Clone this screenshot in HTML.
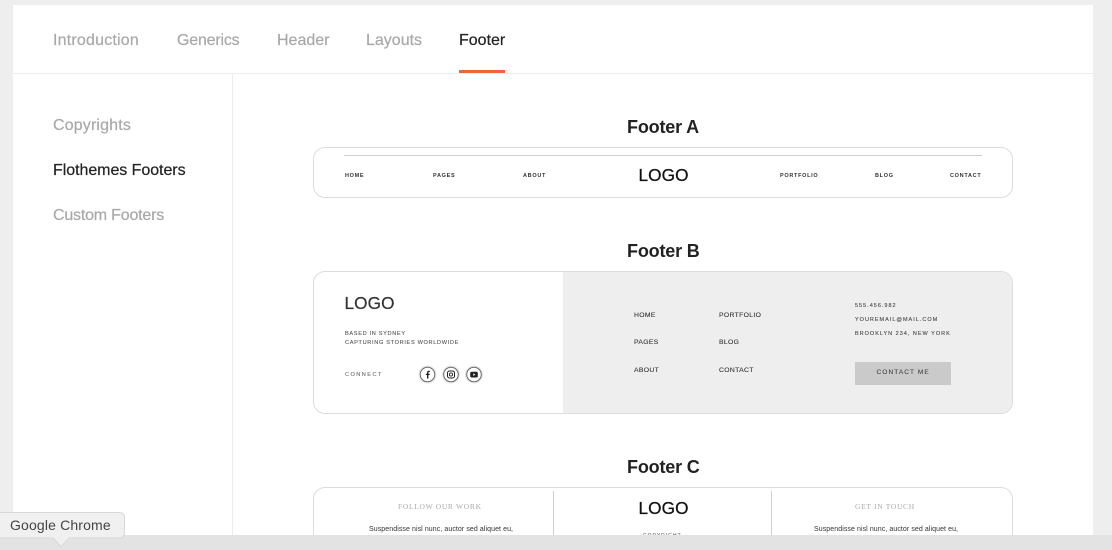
<!DOCTYPE html>
<html>
<head>
<meta charset="utf-8">
<style>
html,body{margin:0;padding:0;width:1112px;height:550px;overflow:hidden;background:#eeeeee;font-family:"Liberation Sans",sans-serif;}
.a{position:absolute;}
.t{position:absolute;white-space:nowrap;line-height:1;}
#wrap{position:absolute;left:0;top:0;width:1112px;height:550px;overflow:hidden;filter:blur(0.3px);}
.nav{font-size:16px;color:#a8a8a8;-webkit-text-stroke:.2px #a8a8a8;}
.side{font-size:16px;color:#a8a8a8;-webkit-text-stroke:.2px #a8a8a8;}
.h{font-size:18px;font-weight:bold;color:#222;letter-spacing:-.18px;}
.box{position:absolute;box-sizing:border-box;left:313px;width:700px;border:1px solid #dcdcdc;border-radius:12px;background:#fff;overflow:hidden;}
.s1{font-size:5.5px;font-weight:bold;color:#333;letter-spacing:.7px;top:174px;}
.logo{font-size:17.2px;color:#111;letter-spacing:.1px;-webkit-text-stroke:.25px #111;}
.s2{font-size:6.8px;color:#333;letter-spacing:.35px;-webkit-text-stroke:.1px #333;}
.s3{font-size:5.5px;color:#444;letter-spacing:1px;-webkit-text-stroke:.1px #444;}
.s4{font-size:5.6px;color:#555;letter-spacing:.67px;-webkit-text-stroke:.1px #555;}
.ser{font-family:"Liberation Serif",serif;font-size:7.5px;color:#aaa;letter-spacing:.68px;}
.p{font-size:7px;color:#333;letter-spacing:.08px;}
</style>
</head>
<body>
<div id="wrap">
<div class="a" style="left:13px;top:5px;width:1080px;height:530px;background:#fff;"></div>
<div class="a" style="left:13px;top:73px;width:1080px;height:1px;background:#ececec;"></div>
<div class="a" style="left:232px;top:74px;width:1px;height:461px;background:#ececec;"></div>

<div class="t nav" style="left:53px;top:32.500px;letter-spacing:.2px;">Introduction</div>
<div class="t nav" style="left:177px;top:32.500px;letter-spacing:-.2px;">Generics</div>
<div class="t nav" style="left:277px;top:32.500px;">Header</div>
<div class="t nav" style="left:366px;top:32.500px;">Layouts</div>
<div class="t nav" style="left:459px;top:32.500px;color:#222;-webkit-text-stroke:.2px #222;">Footer</div>
<div class="a" style="left:459px;top:70px;width:46px;height:3px;background:#f4623a;"></div>

<div class="t side" style="left:53px;top:117.500px;letter-spacing:.15px;">Copyrights</div>
<div class="t side" style="left:53px;top:162.500px;color:#222;-webkit-text-stroke:.2px #222;letter-spacing:-.05px;">Flothemes Footers</div>
<div class="t side" style="left:53px;top:207.500px;letter-spacing:-.2px;">Custom Footers</div>

<div class="t h" style="left:627px;top:118px;">Footer A</div>
<div class="box" style="top:147px;height:51px;"></div>
<div class="a" style="left:344px;top:154.500px;width:638px;height:1.500px;background:#cfcfcf;"></div>
<div class="t s1" style="left:345px;">HOME</div>
<div class="t s1" style="left:433px;">PAGES</div>
<div class="t s1" style="left:523px;">ABOUT</div>
<div class="t logo" style="left:638.500px;top:167px;">LOGO</div>
<div class="t s1" style="left:780px;">PORTFOLIO</div>
<div class="t s1" style="left:875px;">BLOG</div>
<div class="t s1" style="left:950px;">CONTACT</div>

<div class="t h" style="left:627px;top:242px;">Footer B</div>
<div class="box" style="top:271px;height:143px;">
  <div class="a" style="left:249px;top:0;width:451px;height:143px;background:#eeeeee;"></div>
</div>
<div class="t logo" style="left:344.500px;top:295px;color:#333;-webkit-text-stroke:.2px #333;">LOGO</div>
<div class="t s4" style="left:345px;top:332px;">BASED IN SYDNEY</div>
<div class="t s4" style="left:345px;top:341px;">CAPTURING STORIES WORLDWIDE</div>
<div class="t s4" style="left:345px;top:373px;letter-spacing:1.45px;color:#777;">CONNECT</div>

<svg class="a" style="left:418px;top:365px;" width="66" height="20" viewBox="0 0 66 20">
  <g fill="none" stroke="#e4e4e4" stroke-width="1">
    <circle cx="9.500" cy="9.500" r="8.500"/><circle cx="33" cy="9.500" r="8.500"/><circle cx="56" cy="9.500" r="8.500"/>
  </g>
  <g fill="#fff" stroke="#666" stroke-width="1">
    <circle cx="9.500" cy="9.500" r="7.300"/><circle cx="33" cy="9.500" r="7.300"/><circle cx="56" cy="9.500" r="7.300"/>
  </g>
  <path d="M10.400 13.500V10H11.600L11.800 8.700H10.400V7.800C10.400 7.300 10.600 7 11.200 7H11.900V5.800C11.600 5.700 11.200 5.700 10.800 5.700C9.700 5.700 9 6.400 9 7.600V8.700H7.800V10H9V13.500Z" fill="#222"/>
  <rect x="29.500" y="6" width="7" height="7" rx="2" fill="none" stroke="#222" stroke-width="1"/>
  <circle cx="33" cy="9.500" r="1.600" fill="none" stroke="#222" stroke-width=".9"/>
  <rect x="52.200" y="6.700" width="7.600" height="5.800" rx="1.500" fill="#222"/>
  <path d="M55.300 8.200V11L57.400 9.600Z" fill="#fff"/>
</svg>

<div class="t s2" style="left:634px;top:312.500px;">HOME</div>
<div class="t s2" style="left:634px;top:340px;">PAGES</div>
<div class="t s2" style="left:634px;top:367.500px;">ABOUT</div>
<div class="t s2" style="left:719px;top:312.500px;">PORTFOLIO</div>
<div class="t s2" style="left:719px;top:340px;">BLOG</div>
<div class="t s2" style="left:719px;top:367.500px;">CONTACT</div>
<div class="t s3" style="left:855px;top:304px;">555.456.982</div>
<div class="t s3" style="left:855px;top:318px;">YOUREMAIL@MAIL.COM</div>
<div class="t s3" style="left:855px;top:332px;">BROOKLYN 234, NEW YORK</div>
<div class="a" style="left:855px;top:362px;width:96px;height:23px;background:#cacaca;"></div>
<div class="t" style="left:876.500px;top:370px;font-size:6.500px;color:#444;letter-spacing:1.1px;-webkit-text-stroke:.1px #444;">CONTACT ME</div>

<div class="t h" style="left:627px;top:458px;">Footer C</div>
<div class="box" style="top:487px;height:70px;"></div>
<div class="a" style="left:553px;top:491px;width:1px;height:44px;background:#cfcfcf;"></div>
<div class="a" style="left:771px;top:491px;width:1px;height:44px;background:#cfcfcf;"></div>
<div class="t ser" style="left:398px;top:503px;">FOLLOW OUR WORK</div>
<div class="t ser" style="left:855px;top:503px;">GET IN TOUCH</div>
<div class="t logo" style="left:638.500px;top:500px;">LOGO</div>
<div class="t p" style="left:369px;top:525.500px;">Suspendisse nisl nunc, auctor sed aliquet eu,</div>
<div class="t p" style="left:814px;top:525.500px;">Suspendisse nisl nunc, auctor sed aliquet eu,</div>
<div class="t" style="left:643px;top:534px;font-size:5px;color:#555;letter-spacing:1px;">COPYRIGHT</div>

<div class="a" style="left:0;top:535px;width:1112px;height:15px;background:#e3e3e3;"></div>

<svg class="a" style="left:0;top:510px;" width="130" height="40" viewBox="0 0 130 40">
  <path d="M-2 2.500H119Q124.500 2.500 124.500 8V22.500Q124.500 28 119 28H69L61 36.500L53 28H-2Z" fill="#f0f0f0" stroke="#d8d8d8" stroke-width="1"/>
</svg>
<div class="t" style="left:10px;top:518px;font-size:14px;color:#444;letter-spacing:.15px;">Google Chrome</div>
</div>
</body>
</html>
